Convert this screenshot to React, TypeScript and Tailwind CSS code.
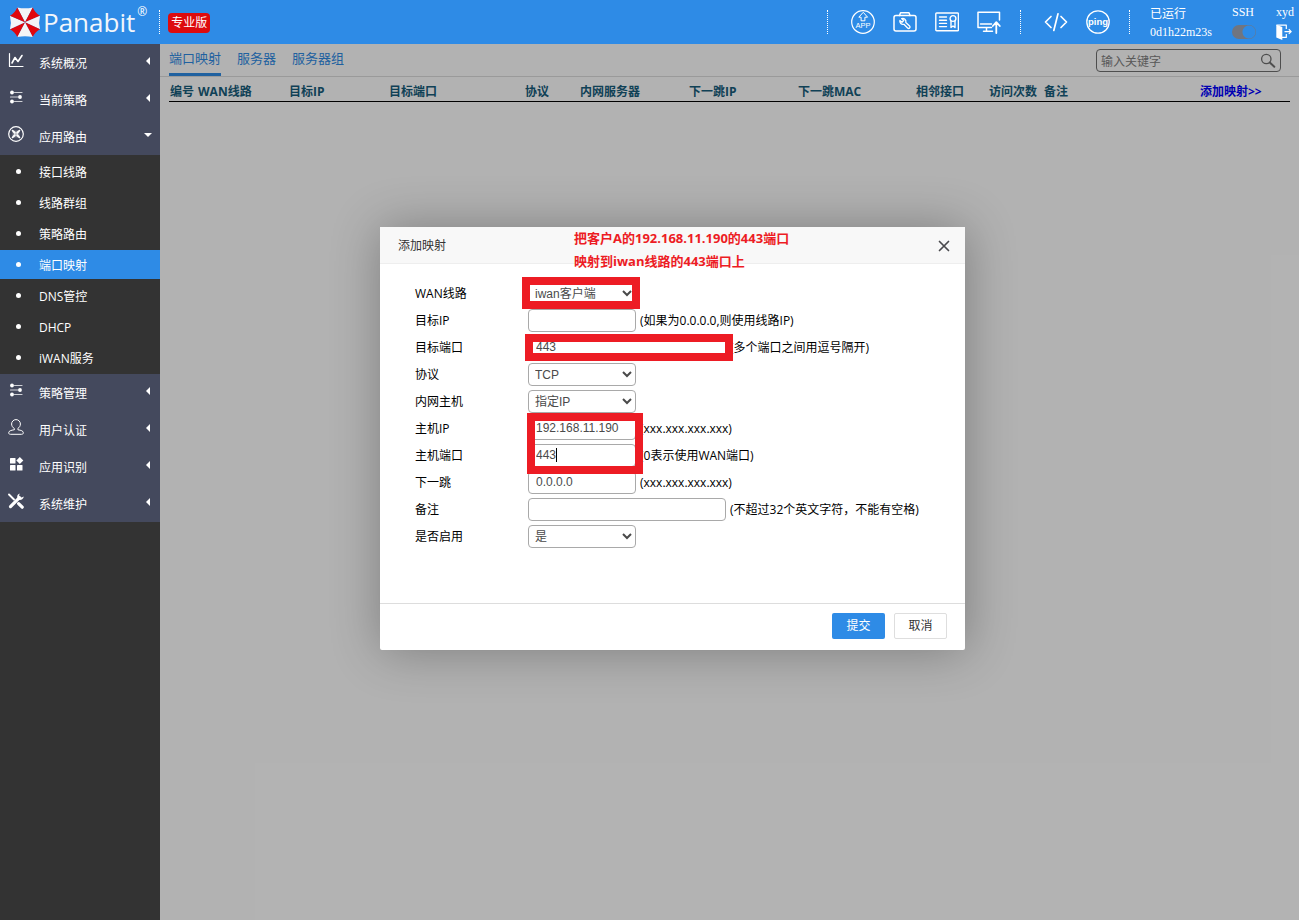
import React from "react";

const UI_FONT = "font-['Open_Sans','Noto_Sans_CJK_SC',sans-serif]";

function Umbrella() {
  const pts = [
    [8, 1.5], [24, 1.5], [31.5, 10], [31.5, 24], [24, 32], [8, 32], [0.5, 24], [0.5, 10],
  ];
  return (
    <svg className="h-8 w-8" viewBox="0 0 32 33" aria-hidden="true">
      {pts.map((p, i) => {
        const q = pts[(i + 1) % 8];
        const mx = (p[0] + q[0]) / 2;
        const my = (p[1] + q[1]) / 2;
        const cx = mx + (16 - mx) * 0.12;
        const cy = my + (16.7 - my) * 0.12;
        return (
          <path
            key={i}
            d={`M16 16.7 L${p[0]} ${p[1]} Q${cx} ${cy} ${q[0]} ${q[1]} Z`}
            fill={i % 2 === 1 ? "#e0060c" : "#f4f4f6"}
          />
        );
      })}
    </svg>
  );
}

function Divider() {
  return <span className="h-6 border-l border-dotted border-white" />;
}

const line = { fill: "none", stroke: "currentColor", strokeLinecap: "round", strokeLinejoin: "round" } as const;

function AppIcon() {
  return (
    <svg className="size-6" viewBox="0 0 24 24" {...line} strokeWidth="1.2">
      <circle cx="12" cy="12" r="11.3" />
      <path d="M12 2.6 7.8 7.2h2.3v3.6h3.8V7.2h2.3Z" strokeWidth="1" />
      <text x="12" y="18.3" textAnchor="middle" fontSize="7.5" fill="currentColor" stroke="none" fontFamily="Liberation Sans, sans-serif">APP</text>
    </svg>
  );
}

function ToolboxIcon() {
  return (
    <svg className="size-6" viewBox="0 0 24 24" {...line} strokeWidth="1.5">
      <rect x="1" y="5.5" width="22" height="15.5" rx="2" />
      <path d="M6.5 5.5 7.5 2.8h8.5l1 2.7" />
      <path d="M8.6 8.6a3.2 3.2 0 0 1 4.2 3.9l3.8 3.5a1.4 1.4 0 0 1-2 2l-3.7-3.7a3.2 3.2 0 0 1-4-3.9l2.1 1.8 1.7-1.7Z" strokeWidth="1.3" />
    </svg>
  );
}

function LicenseIcon() {
  return (
    <svg className="size-6" viewBox="0 0 24 24" {...line} strokeWidth="1.4">
      <rect x="0.8" y="3" width="22.6" height="17.8" rx="0.8" />
      <path d="M4.5 7h7M4.5 10.2h7M4.5 13.4h7M4.5 16.6h7" />
      <circle cx="18" cy="8.5" r="2.9" />
      <path d="M16 11v6.5l2-1.5 2 1.5V11" />
    </svg>
  );
}

function MonitorIcon() {
  return (
    <svg className="size-6" viewBox="0 0 24 24" {...line} strokeWidth="1.5">
      <path d="M22.5 10V2.2H1v15.2h13.5M3.5 14h11M9.5 17.5v3M6.5 21.3h9" />
      <path d="M19.3 23V12.5M15.8 16l3.5-3.8 3.5 3.8" strokeWidth="1.8" />
    </svg>
  );
}

function CodeIcon() {
  return (
    <svg className="size-6" viewBox="0 0 24 24" {...line} strokeWidth="1.7">
      <path d="M7 6.5 1.5 12 7 17.5M17 6.5 22.5 12 17 17.5M14 3.8 9.8 20.5" />
    </svg>
  );
}

function PingIcon() {
  return (
    <svg className="size-6" viewBox="0 0 24 24" {...line} strokeWidth="1.3">
      <circle cx="12" cy="12" r="11.2" />
      <text x="12" y="14.7" textAnchor="middle" fontSize="9.5" fontWeight="bold" fill="currentColor" stroke="none" fontFamily="Liberation Sans, sans-serif">ping</text>
    </svg>
  );
}

function LogoutIcon() {
  return (
    <svg className="size-4" viewBox="0 0 16 16" {...line} strokeWidth="1.2" strokeLinecap="butt">
      <path d="M0.3 0.8 6.3 3V16L0.3 13.6Z" fill="currentColor" stroke="none" />
      <path d="M0.5 1.1h9.8V5M10.3 10v3.4H6M8.5 7.6h6.5M12.8 5.3 15.2 7.6l-2.4 2.3" />
    </svg>
  );
}

function ChartIcon() {
  return (
    <svg className="size-4" viewBox="0 0 16 16" {...line} strokeWidth="1.2">
      <path d="M1.5 1.5v13h13.5" />
      <path d="M4 11 7 5.5l3 4L14 3.5" strokeWidth="1.6" />
    </svg>
  );
}

function SlidersIcon() {
  return (
    <svg className="size-4" viewBox="0 0 16 16" {...line} strokeWidth="1.2">
      <path d="M6.5 3.5h7.5M2.5 8h8M6.5 12.5h7.5" opacity="0.75" />
      <g fill="currentColor" stroke="none">
        <circle cx="4" cy="3.5" r="1.9" />
        <circle cx="12" cy="8" r="1.9" />
        <circle cx="4" cy="12.5" r="1.9" />
      </g>
    </svg>
  );
}

function RouteIcon() {
  return (
    <svg className="size-4" viewBox="0 0 16 16" {...line} strokeWidth="1.2">
      <circle cx="8" cy="8" r="7.3" />
      <path d="M7 7 4.6 4.6M9 7l2.4-2.4M7 9l-2.4 2.4M9 9l2.4 2.4" strokeWidth="1.8" />
      <path d="M6.9 5v1.9H5M9.1 5v1.9H11M6.9 11V9.1H5M9.1 11V9.1H11" strokeWidth="0.8" />
    </svg>
  );
}

function UserIcon() {
  return (
    <svg className="size-4" viewBox="0 0 16 16" {...line} strokeWidth="1">
      <path d="M6.2 9.5C4.5 8.4 3.6 6.8 3.6 5a4.4 4.4 0 0 1 8.8 0c0 1.8-.9 3.4-2.6 4.5l.2 1.300c3 .4 5.3 1.2 5.3 2.9 0 1.2-.7 1.6-1.8 1.6H2.5c-1.1 0-1.800-.4-1.800-1.6 0-1.7 2.3-2.5 5.300-2.9Z" />
    </svg>
  );
}

function AppsIcon() {
  return (
    <svg className="size-4" viewBox="0 0 16 16" fill="currentColor">
      <rect x="2" y="2" width="5.5" height="5.5" rx="0.6" />
      <rect x="2" y="9" width="5.5" height="5.5" rx="0.6" />
      <rect x="9" y="9" width="5.5" height="5.5" rx="0.6" />
      <path d="M11.8 1 15.3 4.5 11.8 8 8.3 4.5Z" />
    </svg>
  );
}

function WrenchIcon() {
  return (
    <svg className="size-4" viewBox="0 0 16 16" {...line}>
      <path d="M1 1.5 6 6.5" strokeWidth="1.9" />
      <path d="M10.6 10.6 14.2 14.2" strokeWidth="3.2" />
      <path d="M2.5 13.6 11.5 4.7" strokeWidth="3.2" />
      <path d="M11.8.4a3.8 3.8 0 0 0-2.3 4.8l1.6 1.6a3.9 3.9 0 0 0 4.7-3.4l-2.2 1.2-1.9-.5-.6-1.8Z" fill="currentColor" stroke="none" />
    </svg>
  );
}

function Caret({ open }: { open?: boolean }) {
  return (
    <svg className="size-2" viewBox="0 0 8 8" fill="currentColor" aria-hidden="true">
      {open ? <path d="M0 2h8L4 6Z" /> : <path d="M6 0v8L2 4Z" />}
    </svg>
  );
}

function Group({ icon, label, open }: { icon: React.ReactNode; label: string; open?: boolean }) {
  return (
    <button type="button" aria-expanded={!!open} className="flex h-[37px] w-full items-center bg-[#44495d] pr-2 pl-2 text-left">
      <span className="pb-[5px]">{icon}</span>
      <span className="ml-[15px] flex-1 pt-[3px]">{label}</span>
      <span className="pb-1"><Caret open={open} /></span>
    </button>
  );
}

const routes = ["接口线路", "线路群组", "策略路由", "端口映射", "DNS管控", "DHCP", "iWAN服务"];

function Sidebar() {
  return (
    <nav className="w-40 shrink-0 bg-[#333333] text-xs leading-4 text-white">
      <Group icon={<ChartIcon />} label="系统概况" />
      <Group icon={<SlidersIcon />} label="当前策略" />
      <Group icon={<RouteIcon />} label="应用路由" open />
      <ul className="flex flex-col gap-0.5 py-0.5">
        {routes.map((r) => (
          <li key={r}>
            <a
              href="#"
              className={
                r === "端口映射"
                  ? "flex h-[29px] items-center bg-[#2e8be6] pl-4"
                  : "flex h-[29px] items-center pl-4"
              }
            >
              <span className="size-[5px] rounded-full bg-white" />
              <span className="ml-[18px] pt-[3px]">{r}</span>
            </a>
          </li>
        ))}
      </ul>
      <Group icon={<SlidersIcon />} label="策略管理" />
      <Group icon={<UserIcon />} label="用户认证" />
      <Group icon={<AppsIcon />} label="应用识别" />
      <Group icon={<WrenchIcon />} label="系统维护" />
    </nav>
  );
}

function IconButton({ label, children }: { label: string; children: React.ReactNode }) {
  return (
    <button type="button" aria-label={label} className="block">
      {children}
    </button>
  );
}

function Header() {
  return (
    <header className="flex h-11 items-center bg-[#2e8be6] pl-[9px] text-white">
      <Umbrella />
      <div className="ml-[2px] flex items-start gap-0.5">
        <span className="font-['Open_Sans',sans-serif] text-[26px] leading-8 font-medium text-[#f2f6fb]">Panabit</span>
        <span className="font-['Open_Sans',sans-serif] text-xs leading-3">®</span>
      </div>
      <div className="ml-3 flex items-center gap-2">
        <Divider />
        <span className="mt-0.5 rounded bg-[#dd0b0e] px-[3px] text-xs leading-5">专业版</span>
      </div>
      <div className="ml-auto flex items-center">
        <Divider />
        <div className="ml-[23px] flex gap-[18px]">
          <IconButton label="APP"><AppIcon /></IconButton>
          <IconButton label="工具"><ToolboxIcon /></IconButton>
          <IconButton label="授权"><LicenseIcon /></IconButton>
          <IconButton label="升级"><MonitorIcon /></IconButton>
        </div>
        <div className="ml-[19px] flex"><Divider /></div>
        <div className="ml-[23px] flex gap-[18px]">
          <IconButton label="命令"><CodeIcon /></IconButton>
          <IconButton label="ping"><PingIcon /></IconButton>
        </div>
        <div className="ml-[19px] flex"><Divider /></div>
        <div className="ml-5 w-[82px] pt-0.5 font-['Liberation_Serif','Noto_Sans_CJK_SC',serif] text-xs leading-[18px]">
          <div>已运行</div>
          <div>0d1h22m23s</div>
        </div>
        <div className="w-11 font-['Liberation_Serif',serif] text-xs leading-5">
          <label htmlFor="ssh" className="block">SSH</label>
          <div className="flex h-5 items-center">
            <input
              id="ssh"
              type="checkbox"
              className="h-[14px] w-6 appearance-none rounded-full bg-[#707580] bg-[radial-gradient(circle_at_17px_7px,#2e8be6_6px,transparent_7px)]"
            />
          </div>
        </div>
        <div className="w-[23px] font-['Liberation_Serif',serif] text-xs leading-5">
          <div>xyd</div>
          <div className="flex h-5 items-center"><IconButton label="退出"><LogoutIcon /></IconButton></div>
        </div>
      </div>
    </header>
  );
}

function Listing() {
  return (
    <div>
      <div className="flex h-[33px] items-start justify-between border-b border-[#dddddd] pr-[18px] pl-[9px]">
        <div className="flex gap-4 text-[13px] leading-7 text-[#2e8be6]">
          <a href="#" className="h-8 border-b-3 border-[#2e8be6]">端口映射</a>
          <a href="#">服务器</a>
          <a href="#">服务器组</a>
        </div>
        <div className="mt-[5px] flex h-[23px] w-[185px] items-center rounded border border-[#707070] pr-1 pl-1">
          <input
            aria-label="搜索"
            placeholder="输入关键字"
            className="min-w-0 flex-1 bg-transparent pt-0.5 text-xs outline-none placeholder:text-[#808080]"
          />
          <svg className="size-4" viewBox="0 0 16 16" {...line} stroke="#707070" strokeWidth="1.3">
            <circle cx="6.3" cy="6" r="4.7" />
            <path d="m9.8 9.5 4.5 4.2" strokeWidth="2" />
          </svg>
        </div>
      </div>
      <div className="pt-[6px] pr-[9px] pl-[9px]">
        <table className="w-full table-fixed border-b border-black text-left text-xs leading-[18px] text-[#175d7c]">
          <thead>
            <tr className="h-[18px] whitespace-nowrap">
              <th className="w-[28px] pl-px">编号</th>
              <th className="w-[91px] pl-px">WAN线路</th>
              <th className="w-[100px] pl-px">目标IP</th>
              <th className="w-[136px] pl-px">目标端口</th>
              <th className="w-[55px] pl-px">协议</th>
              <th className="w-[109px] pl-px">内网服务器</th>
              <th className="w-[109px] pl-px">下一跳IP</th>
              <th className="w-[118px] pl-px">下一跳MAC</th>
              <th className="w-[73px] pl-px">相邻接口</th>
              <th className="w-[55px] pl-px">访问次数</th>
              <th className="pl-px">备注</th>
              <th className="w-[91px] pl-px"><a href="#" className="text-[#0000ff]">添加映射&gt;&gt;</a></th>
            </tr>
          </thead>
        </table>
      </div>
    </div>
  );
}

const control =
  "h-[23px] rounded border border-[#a9a9a9] bg-white font-['Liberation_Sans','Noto_Sans_CJK_SC',sans-serif] text-xs text-[#4a4a4a] outline-none";

function Field({ id, label, hint, children }: { id: string; label: string; hint?: string; children: React.ReactNode }) {
  return (
    <div className="flex h-[27px] items-center">
      <label htmlFor={id} className="w-[113px]">{label}</label>
      {children}
      {hint && <span className="ml-1 whitespace-nowrap">{hint}</span>}
    </div>
  );
}

function Text({ id, value = "", wide }: { id: string; value?: string; wide?: boolean }) {
  return (
    <input
      id={id}
      defaultValue={value}
      className={wide ? `${control} w-[198px] px-[7px] pb-0.5` : `${control} w-[108px] px-[7px] pb-0.5`}
    />
  );
}

function Select({ id, value }: { id: string; value: string }) {
  return (
    <select id={id} className={`${control} w-[108px] px-[2px]`}>
      <option>{value}</option>
    </select>
  );
}

function Dialog() {
  return (
    <section
      role="dialog"
      aria-label="添加映射"
      className="relative w-[585px] rounded-xs bg-white text-xs leading-4 text-black shadow-[1px_1px_50px_rgba(0,0,0,0.3)]"
    >
      <div className="flex h-[37px] items-center justify-between border-b border-[#eeeeee] bg-[#f8f8f8] pt-0.5 pr-[15px] pl-[18px] text-[#333333]">
        <h2>添加映射</h2>
        <button type="button" aria-label="关闭">
          <svg className="size-3" viewBox="0 0 12 12" {...line} stroke="#4a4a4e" strokeWidth="1.7">
            <path d="m1.5 1.5 9 9M10.5 1.5l-9 9" />
          </svg>
        </button>
      </div>
      <form>
        <div className="pt-4 pb-[53px] pl-[35px]">
          <Field id="wan" label="WAN线路"><Select id="wan" value="iwan客户端" /></Field>
          <Field id="dip" label="目标IP" hint="(如果为0.0.0.0,则使用线路IP)"><Text id="dip" /></Field>
          <Field id="dport" label="目标端口" hint="(多个端口之间用逗号隔开)"><Text id="dport" value="443" wide /></Field>
          <Field id="proto" label="协议"><Select id="proto" value="TCP" /></Field>
          <Field id="host" label="内网主机"><Select id="host" value="指定IP" /></Field>
          <Field id="hip" label="主机IP" hint="(xxx.xxx.xxx.xxx)"><Text id="hip" value="192.168.11.190" /></Field>
          <Field id="hport" label="主机端口" hint="(0表示使用WAN端口)"><Text id="hport" value="443" /></Field>
          <Field id="next" label="下一跳" hint="(xxx.xxx.xxx.xxx)"><Text id="next" value="0.0.0.0" /></Field>
          <Field id="note" label="备注" hint="(不超过32个英文字符，不能有空格)"><Text id="note" wide /></Field>
          <Field id="enable" label="是否启用"><Select id="enable" value="是" /></Field>
        </div>
        <div className="flex h-[47px] justify-end gap-[9px] border-t border-[#dddddd] pt-[9px] pr-[18px]">
          <button type="button" className="h-[26px] w-[53px] rounded-xs bg-[#2e8be6] text-white">提交</button>
          <button type="button" className="h-[26px] w-[53px] rounded-xs border border-[#dedede] bg-white text-[#333333]">取消</button>
        </div>
      </form>

      <p className="pointer-events-none absolute top-0 left-[194px] text-[13px] leading-[23px] font-bold whitespace-nowrap text-[#ed1c24]">
        把客户A的192.168.11.190的443端口
        <br />
        映射到iwan线路的443端口上
      </p>
      <span className="pointer-events-none absolute top-[50px] left-[142px] h-8 w-[118px] border-8 border-[#ed1c24]" />
      <span className="pointer-events-none absolute top-[107px] left-[145px] h-[27px] w-[208px] border-8 border-[#ed1c24]" />
      <span className="pointer-events-none absolute top-[186px] left-[147px] h-[61px] w-[116px] border-8 border-[#ed1c24]" />
      <span className="pointer-events-none absolute top-[221px] left-[176px] h-[14px] w-px bg-black" />
    </section>
  );
}

export default function App() {
  return (
    <div className={`flex min-h-screen flex-col ${UI_FONT}`}>
      <Header />
      <div className="flex flex-1">
        <Sidebar />
        <main className="relative min-w-0 flex-1 bg-white">
          <Listing />
          <div className="absolute inset-0 flex items-start justify-center overflow-hidden bg-black/30 pt-[183px] pr-[114px]">
            <Dialog />
          </div>
        </main>
      </div>
    </div>
  );
}
